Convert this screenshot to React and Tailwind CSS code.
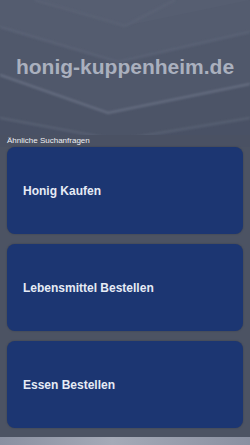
export default function App() {
  const items = ["Honig Kaufen", "Lebensmittel Bestellen", "Essen Bestellen"];
  return (
    <div className="w-[250px] h-[445px] overflow-hidden bg-[#4c5363] flex flex-col" style={{ fontFamily: '"Liberation Sans", Arial, sans-serif' }}>
      <div className="relative h-[135px] shrink-0 bg-[#565e71] flex items-center justify-center">
        <svg className="absolute inset-0" width="250" height="135" viewBox="0 0 250 135">
          <defs>
            <filter id="b" x="-10%" y="-10%" width="120%" height="120%">
              <feGaussianBlur stdDeviation="1" />
            </filter>
          </defs>
          <polygon points="0,0 40,0 125,26 250,0 250,135 0,135" fill="#545c6f" />
          <polygon points="0,27 118,62 250,32 250,135 0,135" fill="#50586b" />
          <polygon points="0,75 108,113 250,84 250,135 0,135" fill="#4c5467" />
          <polygon points="0,118 118,140 250,118 250,135 0,135" fill="#495165" />
          <g filter="url(#b)">
            <polyline points="0,27 118,62 250,32" fill="none" stroke="#5c6477" strokeWidth="2" />
            <polyline points="0,75 108,113 250,84" fill="none" stroke="#687083" strokeWidth="2" />
            <polyline points="0,118 118,140 250,118" fill="none" stroke="#5a6275" strokeWidth="2" />
            <polyline points="35,0 125,26 175,0" fill="none" stroke="#5b6376" strokeWidth="2" />
          </g>
        </svg>
        <div className="relative text-[21px] font-bold text-[#aab0be] leading-none -mt-[2px]">honig-kuppenheim.de</div>
      </div>
      <div className="h-[12px] shrink-0 bg-[#4a5163] flex items-center px-[7px]">
        <span className="text-[8px] text-[#eef0f4] leading-none">Ähnliche Suchanfragen</span>
      </div>
      <div className="flex flex-col gap-[10px] px-[7px]">
        {items.map((t) => (
          <div key={t} className="h-[87px] rounded-[8px] bg-[#1c3672] flex items-center px-[16px] shadow-[0_0_2px_rgba(0,0,0,0.25)]">
            <span className="text-[12px] font-bold text-[#e6ebf5]">{t}</span>
          </div>
        ))}
      </div>
      <div className="mt-auto h-[8px] shrink-0 bg-[linear-gradient(90deg,#8a90a1_0%,#a5aab7_45%,#8a90a1_100%)]" />
    </div>
  );
}
